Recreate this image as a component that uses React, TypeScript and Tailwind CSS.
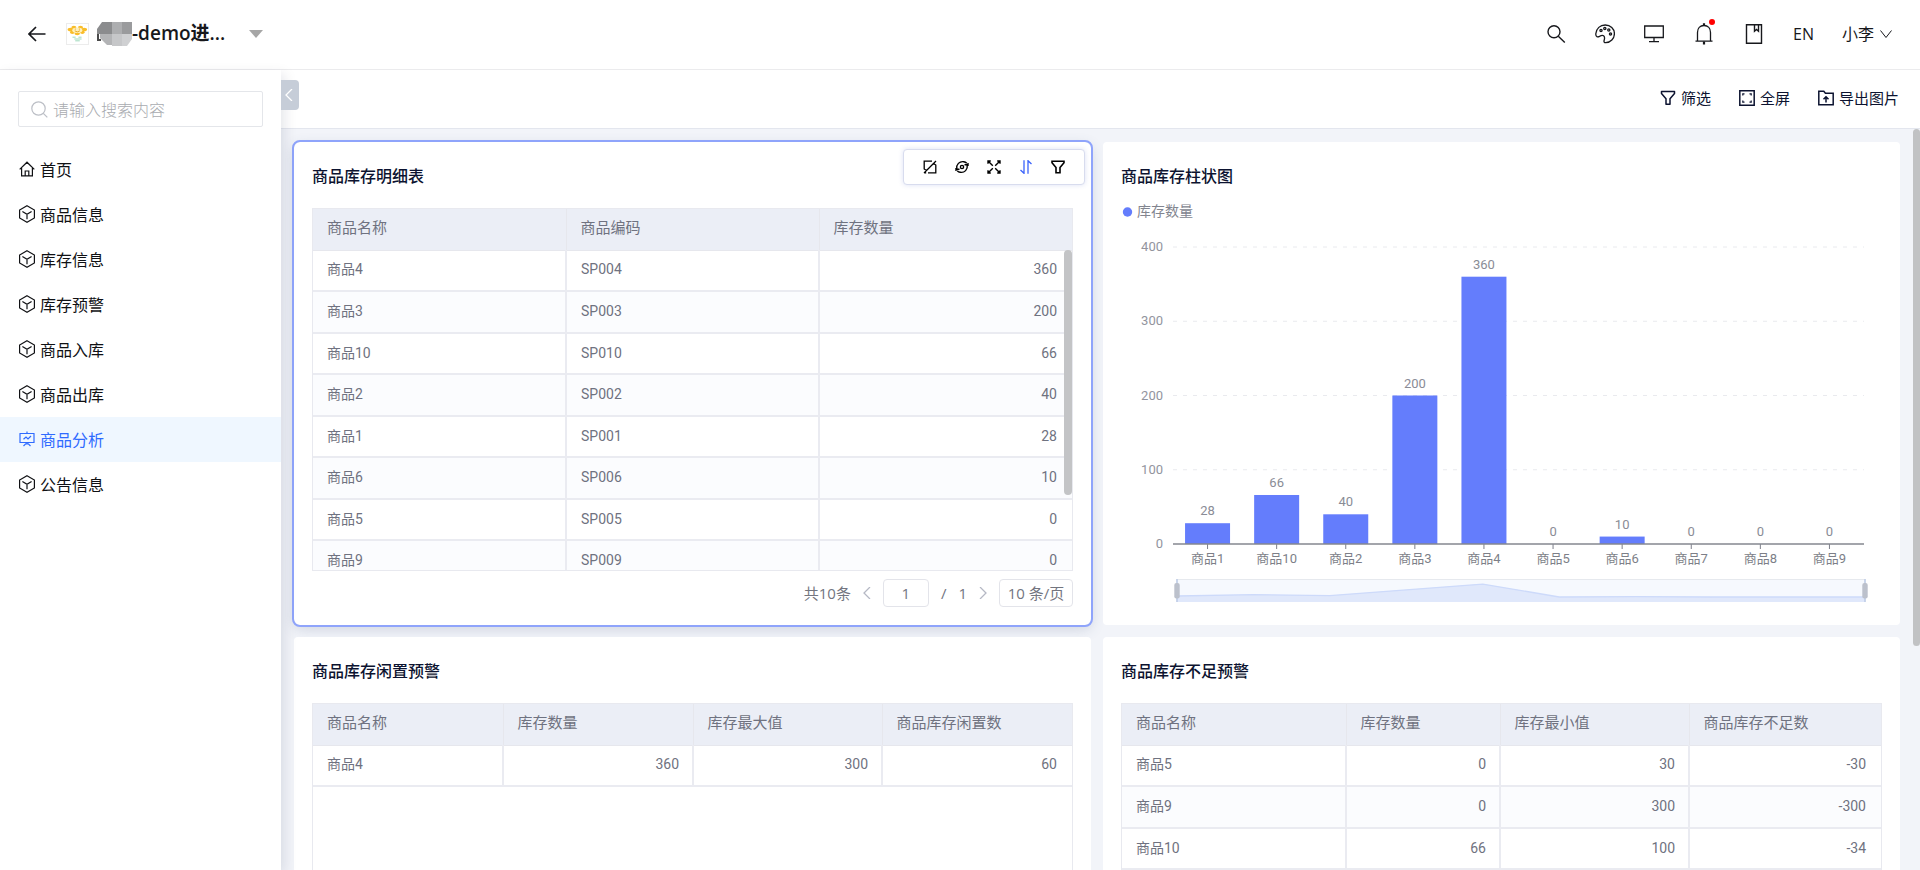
import { useState } from "react";
import type { ReactNode } from "react";
import clsx from "clsx";

type Column = {
  title: string;
  width: string;
  numeric?: boolean;
};

type Row = (string | number)[];

const stockColumns: Column[] = [
  { title: "商品名称", width: "w-[253px]" },
  { title: "商品编码", width: "w-[253px]" },
  { title: "库存数量", width: "w-[253px]", numeric: true },
];

const stockRows: Row[] = [
  ["商品4", "SP004", 360],
  ["商品3", "SP003", 200],
  ["商品10", "SP010", 66],
  ["商品2", "SP002", 40],
  ["商品1", "SP001", 28],
  ["商品6", "SP006", 10],
  ["商品5", "SP005", 0],
  ["商品9", "SP009", 0],
];

const idleColumns: Column[] = [
  { title: "商品名称", width: "w-[190px]" },
  { title: "库存数量", width: "w-[190px]", numeric: true },
  { title: "库存最大值", width: "w-[189px]", numeric: true },
  { title: "商品库存闲置数", width: "w-[190px]", numeric: true },
];

const idleRows: Row[] = [["商品4", 360, 300, 60]];

const shortColumns: Column[] = [
  { title: "商品名称", width: "w-[224px]" },
  { title: "库存数量", width: "w-[154px]", numeric: true },
  { title: "库存最小值", width: "w-[189px]", numeric: true },
  { title: "商品库存不足数", width: "w-[192px]", numeric: true },
];

const shortRows: Row[] = [
  ["商品5", 0, 30, -30],
  ["商品9", 0, 300, -300],
  ["商品10", 66, 100, -34],
];

const chartData = [
  { name: "商品1", value: 28 },
  { name: "商品10", value: 66 },
  { name: "商品2", value: 40 },
  { name: "商品3", value: 200 },
  { name: "商品4", value: 360 },
  { name: "商品5", value: 0 },
  { name: "商品6", value: 10 },
  { name: "商品7", value: 0 },
  { name: "商品8", value: 0 },
  { name: "商品9", value: 0 },
];

const menu = [
  { label: "首页", icon: "home" },
  { label: "商品信息", icon: "cube" },
  { label: "库存信息", icon: "cube" },
  { label: "库存预警", icon: "cube" },
  { label: "商品入库", icon: "cube" },
  { label: "商品出库", icon: "cube" },
  { label: "商品分析", icon: "board" },
  { label: "公告信息", icon: "cube" },
];

function Icon({
  size = "size-4",
  box = 16,
  stroke = 1.2,
  children,
}: {
  size?: string;
  box?: number;
  stroke?: number;
  children: ReactNode;
}) {
  return (
    <svg
      className={clsx("shrink-0", size)}
      viewBox={`0 0 ${box} ${box}`}
      fill="none"
      stroke="currentColor"
      strokeWidth={stroke}
      aria-hidden="true"
    >
      {children}
    </svg>
  );
}

const HomeIcon = () => (
  <Icon>
    <path d="M.7 8.4 8 1.2l7.3 7.2M2.6 7v7.9h10.8V7M6.2 14.9V10h3.6v4.9" />
  </Icon>
);

const CubeIcon = () => (
  <svg
    className="h-[18px] w-4 shrink-0"
    viewBox="0 0 16 18"
    fill="none"
    stroke="currentColor"
    strokeWidth="1.2"
    aria-hidden="true"
  >
    <path d="M8 .8 15.4 5v8L8 17.2.6 13V5L8 .8ZM3.400 6.400 8 9.200l4.600-2.800M8 9.200v5" />
  </svg>
);

const BoardIcon = () => (
  <Icon>
    <path d="M.5 2.500h15M1 2.500v9h14v-9M8 .5v2M4.500 8.200 7 6l2 2 3-3M8 11.500v1.300M4.500 15l2.200-2.200h2.600l2.200 2.200" />
  </Icon>
);

const FunnelIcon = () => (
  <Icon stroke={1.5}>
    <path d="M1.500 1.500h13v2L10 8.800v5.500H6V8.800L1.500 3.500v-2Z" strokeLinejoin="round" />
  </Icon>
);

function DataTable({ columns, rows }: { columns: Column[]; rows: Row[] }) {
  return (
    <table className="w-full table-fixed border-collapse leading-5 font-[family-name:Roboto,'Noto_Sans_CJK_SC',sans-serif] text-[#6f7280]">
      <thead>
        <tr className="h-[41px] bg-[#ebeef6] text-[15px]">
          {columns.map((c) => (
            <th
              key={c.title}
              className={clsx(
                c.width,
                "border-r border-b border-[#e6e7ed] px-[14px] pb-[2px] text-left font-normal last:border-r-0"
              )}
            >
              {c.title}
            </th>
          ))}
        </tr>
      </thead>
      <tbody className="text-sm leading-5">
        {rows.map((row) => (
          <tr
            key={row[0]}
            className="odd:h-[41px] even:h-[42px] even:bg-[#fbfcfe]"
          >
            {row.map((cell, i) => (
              <td
                key={i}
                className={clsx(
                  "border-r-2 border-b-2 border-[#eaebf1] pr-[13px] pb-[2px] pl-[14px] last:border-r-0 last:pr-[15px]",
                  columns[i].numeric && "text-right"
                )}
              >
                {cell}
              </td>
            ))}
          </tr>
        ))}
      </tbody>
    </table>
  );
}

function Card({
  title,
  selected,
  children,
}: {
  title: string;
  selected?: boolean;
  children: ReactNode;
}) {
  return (
    <section
      className={clsx(
        "relative flex h-[483px] min-w-0 flex-col bg-white p-[18px]",
        selected
          ? "rounded-md shadow-[0_4px_14px_rgba(60,80,120,0.2)] outline-2 outline-[#8fa4fb]"
          : "rounded"
      )}
    >
      <h2 className="pb-[2px] text-base leading-[30px] font-medium text-[#0c1330]">
        {title}
      </h2>
      {children}
    </section>
  );
}

function CardTools() {
  return (
    <div className="absolute top-[7px] right-[6px] flex h-9 items-center gap-[18px] rounded border border-[#d8dcee] bg-white px-[19px] text-black shadow-[0_0_5px_rgba(80,100,200,0.2)]">
      <button aria-label="取消联动">
        <Icon size="size-[14px]" box={14} stroke={1.3}>
          <path d="M13 1 1 13M9 1.200H1.200V9l2.300 1.500M5 12.800h7.800V5L10.500 3.500M1.200 12.800h2" />
        </Icon>
      </button>
      <button aria-label="刷新">
        <Icon size="size-[14px]" box={14} stroke={1.400}>
          <path d="M1.800 8.800C1 4.500 4.500 1 8.800 1.700c1.200.2 2.200.8 3 1.600M12.200 5.200c.8 4.300-2.700 7.800-7 7.100-1.200-.2-2.200-.8-3-1.600M9.500 4.700h4M13 3v3M.5 9.300h4M1 8v3" />
          <circle cx="7" cy="7" r="1.600" />
        </Icon>
      </button>
      <button aria-label="放大">
        <Icon size="size-[14px]" box={14} stroke={1.400}>
          <path d="m1 1 4.800 4.800M13 1 8.200 5.800M1 13l4.800-4.800M13 13 8.200 8.200M1 3.800V1h2.800M10.200 1H13v2.800M1 10.200V13h2.800M10.200 13H13v-2.800" />
        </Icon>
      </button>
      <button aria-label="排序" className="text-[#3b63fb]">
        <Icon size="size-[14px]" box={14} stroke={1.300}>
          <path d="M5 .3v13L1.500 10M9 13.700v-13L12.500 4" />
        </Icon>
      </button>
      <button aria-label="筛选">
        <Icon size="size-[14px]" box={14} stroke={1.600}>
          <path d="M1 1.200h12v1.500L9 7.500v5.300H5V7.500L1 2.700V1.200Z" />
        </Icon>
      </button>
    </div>
  );
}

function StockCard() {
  const [page, setPage] = useState("1");

  return (
    <Card title="商品库存明细表" selected>
      <CardTools />
      <div className="relative mt-4 min-h-0 flex-1 overflow-hidden border border-[#e8e9ef]">
        <DataTable columns={stockColumns} rows={stockRows} />
        <div className="absolute top-[41px] right-0 h-[245px] w-2 rounded-full bg-[#c3c4c6]" />
      </div>
      <div className="mt-2 flex h-7 items-center justify-end font-[family-name:'Open_Sans','Noto_Sans_CJK_SC',sans-serif] text-[15px] leading-5 text-[#73757f]">
        <span>共10条</span>
        <button aria-label="上一页" className="ml-[10px] text-[#b5b8c4]">
          <Icon size="size-3" box={12} stroke={1.300}>
            <path d="M9 0 3 6l6 6" />
          </Icon>
        </button>
        <input
          aria-label="页码"
          className="ml-[10px] h-7 w-[46px] rounded border border-[#e3e4ea] text-center"
          value={page}
          onChange={(e) => setPage(e.target.value)}
        />
        <span className="ml-3">/</span>
        <span className="ml-3">1</span>
        <button aria-label="下一页" className="ml-[10px] text-[#b5b8c4]">
          <Icon size="size-3" box={12} stroke={1.300}>
            <path d="m3 0 6 6-6 6" />
          </Icon>
        </button>
        <select
          aria-label="每页条数"
          className="ml-[10px] h-7 w-[74px] appearance-none rounded border border-[#e3e4ea] bg-white text-center"
        >
          <option>10 条/页</option>
        </select>
      </div>
    </Card>
  );
}

// plot area in chart units
const left = 52;
const right = 743;
const bottom = 352;
const unit = 0.7425;
const step = (right - left) / chartData.length;

function BarChart() {
  const brush = chartData
    .map((d, i) => `${56 + (i * 688) / 9},${405 - d.value * 0.036}`)
    .join(" ");

  return (
    <svg
      viewBox="0 0 761 415"
      className="w-full font-[family-name:Roboto,'Noto_Sans_CJK_SC',sans-serif] text-[13px]"
      role="img"
      aria-label="库存数量柱状图"
    >
      <circle cx="6.500" cy="20" r="4.700" fill="#647dfc" />
      <text x="16" y="24" fill="#82858f" className="text-sm">
        库存数量
      </text>
      {[0, 100, 200, 300, 400].map((v) => {
        const y = bottom - v * unit;
        return (
          <g key={v}>
            {v > 0 && (
              <line
                x1={left}
                x2={right}
                y1={y}
                y2={y}
                stroke="#e9eaee"
                strokeDasharray="4 6"
              />
            )}
            <text x="42" y={y + 4} textAnchor="end" fill="#92949e">
              {v}
            </text>
          </g>
        );
      })}
      {chartData.map((d, i) => {
        const x = left + step * (i + 0.5);
        const h = d.value * unit;
        return (
          <g key={d.name}>
            {h > 0 && (
              <rect x={x - 22.5} y={bottom - h} width="45" height={h} fill="#647dfc" />
            )}
            <text x={x} y={bottom - h - 8} textAnchor="middle" fill="#8a8c96">
              {d.value}
            </text>
            <path d={`M${x} ${bottom}v5`} stroke="#7d7f8a" />
            <text x={x} y="371" textAnchor="middle" fill="#7d7f88">
              {d.name}
            </text>
          </g>
        );
      })}
      <path d={`M${left} ${bottom}H${right}`} stroke="#85878f" strokeWidth="1.3" />
      {/* range slider under the axis */}
      <rect x="56" y="387.5" width="688" height="22" fill="#f6f9fe" stroke="#e6e9ee" />
      <polygon points={`56,410 ${brush} 744,410`} fill="#e0e8fb" />
      <polyline points={brush} fill="none" stroke="#cddafa" strokeWidth="1.3" />
      {[56, 744].map((x) => (
        <g key={x}>
          <path d={`M${x} 387v23`} stroke="#bccbe6" strokeWidth="1.5" />
          <rect x={x - 2.7} y="391" width="5.4" height="15.5" rx="2" fill="#bcc1cc" />
        </g>
      ))}
    </svg>
  );
}

function Header() {
  return (
    <header className="flex h-[70px] shrink-0 items-center border-b border-[#ebebed] bg-white pr-7 pb-[2px] pl-7 text-[#17181c]">
      <button aria-label="返回">
        <Icon size="size-[18px]" box={18} stroke={1.7}>
          <path d="M17.500 9H1M8 2 1 9l7 7" />
        </Icon>
      </button>
      <svg className="ml-5 h-[22px] w-[23px] border border-[#ececec]" viewBox="0 0 23 22" aria-hidden="true">
        <g fill="#f9bd29">
          <ellipse cx="3.800" cy="6" rx="3.200" ry="2" />
          <ellipse cx="7.500" cy="3.600" rx="2.800" ry="1.800" />
          <ellipse cx="14.800" cy="3.600" rx="2.800" ry="1.800" />
          <ellipse cx="18.800" cy="6" rx="3.200" ry="2" />
          <ellipse cx="5.800" cy="9" rx="2.500" ry="2" />
          <ellipse cx="16.800" cy="9" rx="2.500" ry="2" />
          <ellipse cx="11.200" cy="10.500" rx="3" ry="2" />
        </g>
        <ellipse cx="11.300" cy="6.800" rx="5.500" ry="3" fill="#fff0bd" />
        <path d="M8.500 7.500q2.800 2.400 5.600 0M8.500 5.600h1.200M13 5.600h1.200" stroke="#e2a416" fill="none" />
        <path d="M6 14.500h3.500M12.500 14.500H16M8 16.500h8M9 18.500h5" stroke="#9ed9bb" strokeWidth="1.1" />
      </svg>
      <div className="ml-[7px] flex items-center font-[family-name:'Open_Sans','Noto_Sans_CJK_SC',sans-serif] text-[19px] font-semibold">
        <svg className="h-6 w-9" viewBox="0 0 36 24" aria-hidden="true">
          <path d="M1 9h4M2 9v8M1 18h4" stroke="#111" strokeWidth="1.500" />
          <path d="M6 0h10v12H1V7z" fill="#8b8c8e" />
          <path d="M16 0h10v12H16z" fill="#adaeb0" />
          <path d="M26 0h10v12H26z" fill="#9a9b9d" />
          <path d="M4 12h12v11h-5l-7-7z" fill="#b3b4b6" />
          <path d="M16 12h10v12H16z" fill="#c6c7c9" />
          <path d="M26 12h10v5l-5 7h-5z" fill="#cfd0d2" />
        </svg>
        <span>-demo进...</span>
      </div>
      <button aria-label="切换应用" className="ml-6">
        <svg className="h-2 w-[14px]" viewBox="0 0 14 8" fill="#a6a6a6">
          <path d="M0 0h14L7 8z" />
        </svg>
      </button>
      <div className="ml-auto flex items-center gap-[29px]">
        <button aria-label="搜索">
          <Icon size="size-5" box={20} stroke={1.400}>
            <circle cx="8" cy="7.800" r="6" />
            <path d="m12.300 12.200 6.500 6.200" />
          </Icon>
        </button>
        <button aria-label="主题">
          <Icon size="size-5" box={20} stroke={1.300}>
            <path d="M.8 9.800C1.200 4.400 5.200 1 10.200 1c5.300 0 9.200 3.800 9.200 8.700 0 5-3.900 9-8.700 9-1.500 0-2-1-1.600-2.200.7-2 .7-3.700-.5-4.700-1.300-1-2.700-.2-4.100.6-1.700.9-3.900.5-3.700-2.600Z" />
            <circle cx="6" cy="6.500" r="1.100" />
            <circle cx="9.800" cy="4.500" r="1.100" />
            <circle cx="13.800" cy="6" r="1.100" />
            <circle cx="15.500" cy="9.900" r="1.100" />
          </Icon>
        </button>
        <button aria-label="显示">
          <Icon size="size-5" box={20} stroke={1.300}>
            <path d="M.7 2h18.600v11.500H.7zM10 13.500v4M5 17.700h10" />
          </Icon>
        </button>
        <button aria-label="消息" className="relative">
          <Icon size="size-[22px]" box={22} stroke={1.300}>
            <path d="M4.500 18V9.500C4.500 5.500 7 2.500 11 2.500s6.500 3 6.500 7V18M2.500 18.200h17" />
            <path d="M11 .3v2.500M11 18.500v3" strokeWidth="2.200" />
          </Icon>
          <span className="absolute -top-1 right-0 size-[6px] rounded-full bg-[#ff0000]" />
        </button>
        <button aria-label="手册">
          <Icon size="size-5" box={20} stroke={1.400}>
            <path d="M2.500.7h15v18.600h-15zM10.500.7v6.500l2-1.700 2 1.700V.7" />
          </Icon>
        </button>
        <div className="flex items-center gap-7 font-[family-name:'Open_Sans','Noto_Sans_CJK_SC',sans-serif] text-base">
          <button>EN</button>
          <button className="flex items-center gap-[6px]">
            小李
            <Icon size="size-3" box={12} stroke={1}>
              <path d="m.5 2.500 5.500 7 5.500-7" />
            </Icon>
          </button>
        </div>
      </div>
    </header>
  );
}

export default function App() {
  const [active, setActive] = useState("商品分析");

  return (
    <div className="flex h-screen flex-col overflow-hidden bg-white font-[family-name:'Noto_Sans_CJK_SC',sans-serif]">
      <Header />
      <div className="flex min-h-0 flex-1">
        <aside className="z-10 w-[281px] shrink-0 bg-white pt-[21px] shadow-[4px_4px_12px_rgba(0,21,60,0.1)]">
          <label className="mx-[18px] flex h-9 items-center gap-[5px] rounded-xs border border-[#e4e6ea] pl-3 text-[#bcbfc6]">
            <Icon size="size-[17px]" box={17} stroke={1.200}>
              <circle cx="7.500" cy="7.500" r="6.700" />
              <path d="m12.300 12.300 4 4" />
            </Icon>
            <input
              className="w-full min-w-0 text-base font-light outline-none placeholder:text-[#a9abb0]"
              placeholder="请输入搜索内容"
              aria-label="搜索菜单"
            />
          </label>
          <nav className="mt-5">
            {menu.map((item) => (
              <a
                key={item.label}
                href="#"
                onClick={() => setActive(item.label)}
                className={clsx(
                  "flex h-[45px] items-center gap-[5px] pb-[2px] pl-[19px] text-base",
                  active === item.label
                    ? "bg-[#eff7ff] text-[#2f6bff]"
                    : "text-[#101114]"
                )}
              >
                {item.icon === "home" && <HomeIcon />}
                {item.icon === "cube" && <CubeIcon />}
                {item.icon === "board" && <BoardIcon />}
                {item.label}
              </a>
            ))}
          </nav>
        </aside>

        <main className="relative flex min-w-0 flex-1 flex-col">
          <button
            aria-label="收起菜单"
            className="absolute top-[10px] left-0 z-20 flex h-[30px] w-[18px] items-center justify-center rounded-r bg-[#c6cdd8] text-white"
          >
            <Icon size="size-3" box={12} stroke={1.300}>
              <path d="M8 0 2 6l6 6" />
            </Icon>
          </button>
          <div className="flex h-[59px] shrink-0 items-center justify-end gap-7 border-b border-[#e3e6ee] pr-[21px] pb-[2px] text-[15px] text-[#0c1330]">
            <button className="flex items-center gap-[5px]">
              <FunnelIcon />
              筛选
            </button>
            <button className="flex items-center gap-[5px]">
              <Icon stroke={1.500}>
                <path d="M.8.8h14.400v14.400H.8z" />
                <path d="M3.800 5.500V3.800h1.700M10.500 3.800h1.700v1.700M3.800 10.500v1.700h1.700M10.500 12.200h1.700v-1.700" strokeWidth="1.2" />
              </Icon>
              全屏
            </button>
            <button className="flex items-center gap-[5px]">
              <Icon stroke={1.500}>
                <path d="M.8 1.200h5l1.600 2h7.800v11.600H.8zM8 12.500V7M5.500 9.200 8 6.700l2.500 2.500" />
              </Icon>
              导出图片
            </button>
          </div>

          <div className="relative min-h-0 flex-1 overflow-hidden bg-[#f2f4f9] pt-[13px] pr-5 pl-[13px]">
            <div className="grid grid-cols-2 gap-3">
              <StockCard />
              <Card title="商品库存柱状图">
                <BarChart />
              </Card>
              <Card title="商品库存闲置预警">
                <div className="mt-4 flex-1 border border-[#e8e9ef]">
                  <DataTable columns={idleColumns} rows={idleRows} />
                </div>
              </Card>
              <Card title="商品库存不足预警">
                <div className="mt-4 flex-1 border border-[#e8e9ef]">
                  <DataTable columns={shortColumns} rows={shortRows} />
                </div>
              </Card>
            </div>
            <div className="absolute top-0 right-0 h-[517px] w-[7px] rounded-full bg-[#c1c2c4]" />
          </div>
        </main>
      </div>
    </div>
  );
}
